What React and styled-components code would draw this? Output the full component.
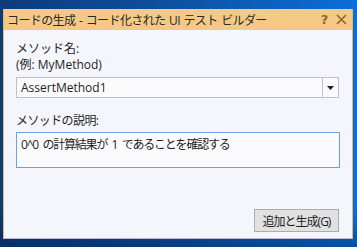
import React from 'react';
import styled, { createGlobalStyle } from 'styled-components';

const GlobalStyle = createGlobalStyle`
  html, body {
    margin: 0;
    padding: 0;
    width: 357px;
    height: 247px;
    overflow: hidden;
  }
  body {
    font-family: "Open Sans", "Noto Sans CJK JP", sans-serif;
  }
`;

function App() {
  return (
    <Desktop>
      <GlobalStyle />
      <Dialog>
        <TitleBar>
          <Title>コードの生成 - コード化された UI テスト ビルダー</Title>
          <TitleButtons>
            <TitleButton>?</TitleButton>
            <TitleButton>
              <svg width="11" height="11" viewBox="0 0 11 11">
                <path d="M1 1 L10 10 M10 1 L1 10" stroke="currentColor" strokeWidth="1.6" />
              </svg>
            </TitleButton>
          </TitleButtons>
        </TitleBar>
        <Body>
          <Label>メソッド名:</Label>
          <Label>(例: MyMethod)</Label>
          <Combo>
            <ComboText>AssertMethod1</ComboText>
            <ComboArrow>
              <svg width="7" height="4" viewBox="0 0 7 4">
                <path d="M0 0 H7 L3.5 4 Z" fill="#1e1e1e" />
              </svg>
            </ComboArrow>
          </Combo>
          <Label $top={15} $tight>メソッドの説明:</Label>
          <TextBox>0^0 の計算結果が 1 であることを確認する</TextBox>
          <Footer>
            <Button>追加と生成(G)</Button>
          </Footer>
        </Body>
      </Dialog>
    </Desktop>
  );
}

// Styles

const Desktop = styled.div`
  width: 357px;
  height: 247px;
  box-sizing: border-box;
  padding: 9px 4px 0 3px;
  background:
    linear-gradient(to bottom, rgba(0, 20, 60, 0) 85%, rgba(0, 20, 60, 0.35) 100%),
    linear-gradient(to right, #0c3b7c 0%, #0d4f9e 45%, #0c66c8 85%, #0a6fd8 100%);
`;

const Dialog = styled.div`
  width: 350px;
  height: 230px;
  display: flex;
  flex-direction: column;
  border: 1px solid #e8b868;
  border-top: 0;
  border-bottom: 1px solid #b9b9d6;
  box-sizing: border-box;
`;

const TitleBar = styled.div`
  height: 21px;
  flex: none;
  display: flex;
  align-items: center;
  justify-content: space-between;
  background: #f4c985;
  padding: 0 4px 0 3px;
`;

const Title = styled.div`
  font-size: 12px;
  color: #2a2a2a;
  white-space: nowrap;
  letter-spacing: -0.6px;
  word-spacing: 1px;
`;

const TitleButtons = styled.div`
  display: flex;
  align-items: center;
  gap: 4px;
`;

const TitleButton = styled.div`
  width: 13px;
  height: 16px;
  display: flex;
  align-items: center;
  justify-content: center;
  color: #8a6a2c;
  font-size: 13px;
  font-weight: bold;
  font-family: "DejaVu Sans", sans-serif;
`;

const Body = styled.div`
  flex: 1;
  display: flex;
  flex-direction: column;
  background: #f5f6fc;
  padding: 11px 12px 6px 12px;
`;

const Label = styled.div`
  font-size: 12px;
  line-height: 16px;
  color: #1e1e1e;
  margin-top: ${(p) => p.$top || 0}px;
  letter-spacing: ${(p) => (p.$tight ? '-0.6px' : '0')};
`;

const Combo = styled.div`
  margin-top: 4px;
  height: 21px;
  width: 323px;
  display: flex;
  border: 1px solid #b9c1d8;
  background: #fbfbfd;
  box-sizing: border-box;
`;

const ComboText = styled.div`
  flex: 1;
  font-size: 12px;
  line-height: 19px;
  padding-left: 4px;
  color: #1e1e1e;
`;

const ComboArrow = styled.div`
  width: 15px;
  border-left: 1px solid #b9c1d8;
  display: flex;
  align-items: center;
  justify-content: center;
`;

const TextBox = styled.div`
  margin-top: 3px;
  width: 324px;
  height: 36px;
  box-sizing: border-box;
  border: 1px solid #64a4e4;
  background: #fbfbfd;
  font-size: 12px;
  line-height: 16px;
  letter-spacing: -1.2px;
  word-spacing: 2.5px;
  padding: 4px 4px;
  color: #1e1e1e;
`;

const Footer = styled.div`
  flex: 1;
  display: flex;
  justify-content: flex-end;
  align-items: flex-end;
  padding-right: 1px;
`;

const Button = styled.div`
  width: 85px;
  height: 23px;
  box-sizing: border-box;
  border: 1px solid #adadad;
  background: #e1e1e1;
  font-size: 12px;
  letter-spacing: -1px;
  display: flex;
  align-items: center;
  justify-content: center;
  color: #1e1e1e;
`;

export default App
